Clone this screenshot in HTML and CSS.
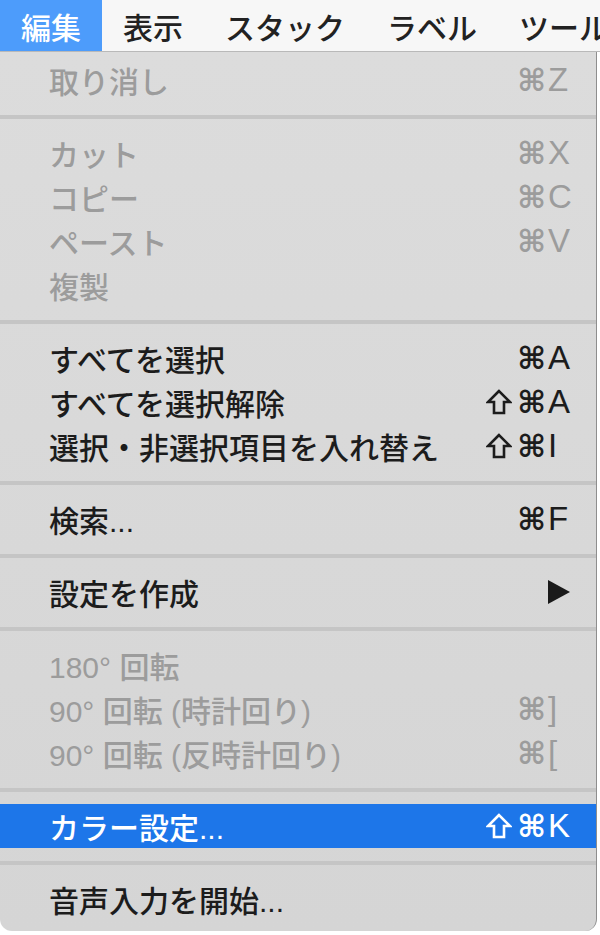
FILE: index.html
```html
<!DOCTYPE html>
<html lang="ja">
<head>
    <meta charset="UTF-8">
    <meta name="viewport" content="width=device-width, initial-scale=1.0">
    <title>編集メニュー</title>
    <link rel="stylesheet" href="styles.css">
</head>
<body>
    <div class="menubar">
        <span class="bar-item active">編集</span>
        <span class="bar-item">表示</span>
        <span class="bar-item">スタック</span>
        <span class="bar-item">ラベル</span>
        <span class="bar-item">ツール</span>
    </div>

    <div class="menu">
        <div class="item disabled"><span class="label">取り消し</span><span class="mods"><span class="cmd">⌘</span></span><span class="key">Z</span></div>
        <div class="sep"></div>
        <div class="item disabled"><span class="label">カット</span><span class="mods"><span class="cmd">⌘</span></span><span class="key">X</span></div>
        <div class="item disabled"><span class="label">コピー</span><span class="mods"><span class="cmd">⌘</span></span><span class="key">C</span></div>
        <div class="item disabled"><span class="label">ペースト</span><span class="mods"><span class="cmd">⌘</span></span><span class="key">V</span></div>
        <div class="item disabled"><span class="label">複製</span></div>
        <div class="sep"></div>
        <div class="item"><span class="label">すべてを選択</span><span class="mods"><span class="cmd">⌘</span></span><span class="key">A</span></div>
        <div class="item"><span class="label">すべてを選択解除</span><span class="mods"><svg class="shift" viewBox="0 0 26 26" width="26" height="26"><path d="M13 2 L2 13 L8 13 L8 24 L18 24 L18 13 L24 13 Z"/></svg><span class="cmd">⌘</span></span><span class="key">A</span></div>
        <div class="item"><span class="label">選択・非選択項目を入れ替え</span><span class="mods"><svg class="shift" viewBox="0 0 26 26" width="26" height="26"><path d="M13 2 L2 13 L8 13 L8 24 L18 24 L18 13 L24 13 Z"/></svg><span class="cmd">⌘</span></span><span class="key">I</span></div>
        <div class="sep"></div>
        <div class="item"><span class="label">検索...</span><span class="mods"><span class="cmd">⌘</span></span><span class="key">F</span></div>
        <div class="sep"></div>
        <div class="item"><span class="label">設定を作成</span><span class="key"><svg class="arrow" viewBox="0 0 22 24" width="22" height="24"><path d="M0 0 L22 12 L0 24 Z"/></svg></span></div>
        <div class="sep"></div>
        <div class="item disabled"><span class="label">180° 回転</span></div>
        <div class="item disabled"><span class="label">90° 回転 (時計回り)</span><span class="mods"><span class="cmd">⌘</span></span><span class="key">]</span></div>
        <div class="item disabled"><span class="label">90° 回転 (反時計回り)</span><span class="mods"><span class="cmd">⌘</span></span><span class="key">[</span></div>
        <div class="sep"></div>
        <div class="item selected"><span class="label">カラー設定...</span><span class="mods"><svg class="shift" viewBox="0 0 26 26" width="26" height="26"><path d="M13 2 L2 13 L8 13 L8 24 L18 24 L18 13 L24 13 Z"/></svg><span class="cmd">⌘</span></span><span class="key">K</span></div>
        <div class="sep"></div>
        <div class="item"><span class="label">音声入力を開始...</span></div>
    </div>
</body>
</html>
```

FILE: styles.css
```css
body {
    margin: 0;
    background: #ffffff;
    font-family: "Liberation Sans", "Noto Sans CJK JP", "DejaVu Sans", sans-serif;
    overflow: hidden;
}
.menubar {
    display: flex;
    height: 52px;
    background: #f7f7f7;
    border-bottom: 1px solid #b9b9b9;
    box-sizing: border-box;
    white-space: nowrap;
}
.bar-item {
    display: flex;
    align-items: center;
    padding: 0 21px;
    font-size: 30px;
    font-weight: 500;
    color: #222222;
}
.bar-item.active {
    background: #4d9cfb;
    color: #ffffff;
}
.menu {
    width: 597px;
    padding: 6px 0 10px;
    background: linear-gradient(#dcdcdc, #d5d5d5);
    border-right: 1px solid #8e8e8e;
    border-radius: 0 0 12px 12px;
    box-sizing: border-box;
}
.item {
    display: grid;
    grid-template-columns: 1fr auto 30px;
    align-items: center;
    height: 44px;
    padding: 0 18px 0 49px;
    font-size: 30px;
    font-weight: 500;
    color: #1c1c1c;
    white-space: nowrap;
}
.item.disabled {
    color: #9c9c9c;
}
.item.selected {
    background: #1d76e9;
    color: #ffffff;
}
.label {
    grid-column: 1;
}
.mods {
    grid-column: 2;
    display: flex;
    align-items: center;
    justify-content: flex-end;
    gap: 5px;
    padding-right: 2px;
}
.cmd {
    font-family: "DejaVu Sans", sans-serif;
    font-size: 31px;
    font-weight: bold;
}
.shift {
    fill: none;
    stroke: currentColor;
    stroke-width: 2.6;
    stroke-linejoin: miter;
}
.key {
    grid-column: 3;
    display: flex;
    align-items: center;
    font-size: 33px;
}
.arrow {
    fill: #1a1a1a;
}
.sep {
    height: 29px;
    display: flex;
    align-items: center;
}
.sep::before {
    content: "";
    display: block;
    width: 100%;
    height: 4px;
    background: #c5c5c5;
}
```
